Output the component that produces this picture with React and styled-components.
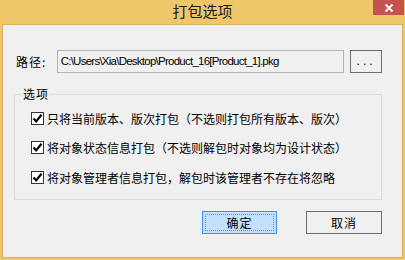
import React from 'react';
import styled, { createGlobalStyle } from 'styled-components';

const GlobalStyle = createGlobalStyle`
  html, body { margin: 0; padding: 0; background: #ffffff; }
  body { font-family: "Noto Sans CJK SC", "Liberation Sans", sans-serif; }
`;

// window frame
const Frame = styled.div`
  width: 405px;
  height: 260px;
  box-sizing: border-box;
  background: #efc76a;
  padding: 0 2px 2px 2px;
  display: flex;
  flex-direction: column;
`;

const TitleBar = styled.div`
  height: 24px;
  display: grid;
  grid-template-columns: 1fr auto 1fr;
  flex-shrink: 0;
`;

const Title = styled.div`
  grid-column: 2;
  font-size: 15px;
  line-height: 22px;
  color: #1a1a1a;
`;

const CloseButton = styled.div`
  grid-column: 3;
  justify-self: end;
  width: 31px;
  height: 15px;
  margin-right: -1px;
  background: #c75050;
  display: flex;
  align-items: center;
  justify-content: center;
`;

const Client = styled.div`
  flex: 1;
  background: #f0f0f0;
  border: 1px solid #d7b05d;
  padding: 25px 20px 0 11px;
  display: flex;
  flex-direction: column;
  font-size: 12px;
  color: #000;
`;

const PathRow = styled.div`
  display: flex;
  align-items: center;
  height: 23px;
`;

const Label = styled.span`
  width: 41px;
  margin-left: 2px;
  font-size: 12px;
  letter-spacing: 1px;
`;

const PathBox = styled.div`
  width: 290px;
  height: 23px;
  box-sizing: border-box;
  border: 1px solid #b4b4b4;
  background: #f0f0f0;
  font-family: "Liberation Sans", sans-serif;
  font-size: 11.5px;
  letter-spacing: -0.75px;
  line-height: 21px;
  padding-left: 3px;
  white-space: nowrap;
`;

const Button = styled.div`
  width: ${p => p.$w}px;
  height: 23px;
  box-sizing: border-box;
  border: 1px solid ${p => (p.$primary ? '#3d95ef' : '#707070')};
  background: ${p => (p.$primary ? '#c4e0fc' : '#f0f0f0')};
  display: flex;
  align-items: center;
  justify-content: center;
  position: relative;
  font-size: 12px;
  letter-spacing: 1px;
`;

const Focus = styled.div`
  position: absolute;
  inset: 2px;
  border: 1px dotted #e07800;
`;

const BrowseButton = styled(Button)`
  margin-left: 6px;
  font-family: "Liberation Sans", sans-serif;
  letter-spacing: 3px;
  padding-bottom: 2px;
`;

const Group = styled.fieldset`
  margin: 14px 0 0 0;
  padding: 10px 0 0 16px;
  height: 113px;
  box-sizing: border-box;
  border: 1px solid #dcdcdc;
  display: flex;
  flex-direction: column;
  gap: 15.5px;
`;

const Legend = styled.legend`
  padding: 0 1px;
  margin-left: -9px;
  font-size: 12px;
  line-height: 14px;
  letter-spacing: 1px;
`;

const CheckRow = styled.div`
  display: flex;
  align-items: center;
  height: 14px;
  gap: 3px;
  white-space: nowrap;
`;

const Box = styled.div`
  width: 13px;
  height: 13px;
  box-sizing: border-box;
  border: 1px solid #333333;
  background: #ffffff;
  display: flex;
  align-items: center;
  justify-content: center;
`;

const Footer = styled.div`
  display: flex;
  justify-content: flex-end;
  gap: 29px;
  margin-top: 11px;
`;

function Check({ children }) {
  return (
    <CheckRow>
      <Box>
        <svg width="11" height="11" viewBox="0 0 11 11">
          <path d="M1.5 5.5 L4.2 8.4 L9.5 1.8" fill="none" stroke="#000" strokeWidth="2.2" />
        </svg>
      </Box>
      <span>{children}</span>
    </CheckRow>
  );
}

export default function App() {
  return (
    <>
      <GlobalStyle />
      <Frame>
        <TitleBar>
          <Title>打包选项</Title>
          <CloseButton>
            <svg width="10" height="10" viewBox="0 0 10 10">
              <path d="M1.5 1.5 L8.5 8.5 M8.5 1.5 L1.5 8.5" stroke="#fff" strokeWidth="2" />
            </svg>
          </CloseButton>
        </TitleBar>
        <Client>
          <PathRow>
            <Label>路径:</Label>
            <PathBox>C:\Users\Xia\Desktop\Product_16[Product_1].pkg</PathBox>
            <BrowseButton $w={32}>...</BrowseButton>
          </PathRow>
          <Group>
            <Legend>选项</Legend>
            <Check>只将当前版本、版次打包（不选则打包所有版本、版次）</Check>
            <Check>将对象状态信息打包（不选则解包时对象均为设计状态）</Check>
            <Check>将对象管理者信息打包，解包时该管理者不存在将忽略</Check>
          </Group>
          <Footer>
            <Button $w={75} $primary>
              <Focus />
              确定
            </Button>
            <Button $w={76}>取消</Button>
          </Footer>
        </Client>
      </Frame>
    </>
  );
}
